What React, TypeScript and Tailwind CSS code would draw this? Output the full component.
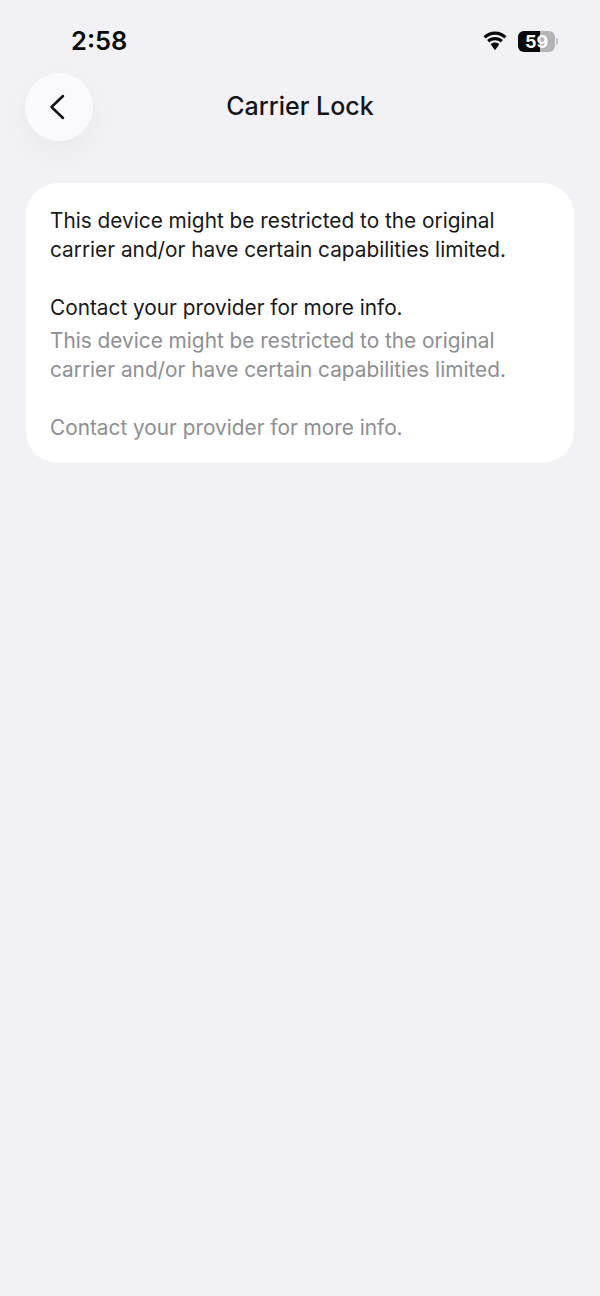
const BackIcon = () => (
  <svg width="18" height="28" viewBox="0 0 18 28" fill="none">
    <path d="M15 3 L3.500 14 L15 25" stroke="#111" strokeWidth="2.500" strokeLinecap="round" strokeLinejoin="round" />
  </svg>
);

const Wifi = () => (
  <svg width="26" height="20" viewBox="0 0 26 20" fill="#0a0a0a">
    <path d="M13 3.800c3.600 0 6.900 1.400 9.300 3.700l2.200-2.300C21.500 2.300 17.500.5 13 .5S4.500 2.300 1.500 5.200l2.200 2.300C6.100 5.200 9.400 3.800 13 3.800z" />
    <path d="M13 9.200c2.200 0 4.200.9 5.700 2.200l2.200-2.300C18.800 7.200 16 6 13 6S7.200 7.200 5.100 9.100l2.200 2.300c1.500-1.300 3.500-2.200 5.700-2.200z" />
    <path d="M13 11.500c-1.700 0-3.200.6-4.300 1.700L13 19.300l4.300-6.100c-1.100-1.100-2.600-1.700-4.300-1.700z" />
  </svg>
);

const Battery = () => (
  <div className="flex items-center">
    <div className="relative w-[37px] h-[21px] rounded-[6px] bg-[#b4b4b6] overflow-hidden">
      <div className="absolute left-0 top-0 bottom-0 w-[22px] bg-[#0a0a0a]" />
      <span className="absolute inset-0 flex items-center justify-center text-white text-[18px] font-bold">59</span>
    </div>
    <div className="w-[2px] h-[7px] ml-[1px] rounded-r bg-[#c4c4c6]" />
  </div>
);

const Copy = ({ color }: { color: string }) => (
  <div className={color}>
    <p>This device might be restricted to the original<br />carrier and/or have certain capabilities limited.</p>
    <p className="mt-[29px]">Contact your provider for more info.</p>
  </div>
);

export default function App() {
  return (
    <div className="w-[600px] h-[1296px] bg-[#f1f1f6] overflow-hidden font-['Inter',sans-serif]">
      <div className="flex justify-between items-center pl-[71px] pr-[42px] pt-[26px] h-[56px]">
        <span className="text-[25.500px] font-semibold text-[#0a0a0a]">2:58</span>
        <div className="flex items-center gap-[10px]">
          <Wifi />
          <Battery />
        </div>
      </div>
      <div className="relative flex items-center justify-center h-[68px] mt-[17px]">
        <button className="absolute left-[25px] top-0 w-[68px] h-[68px] rounded-full bg-[#fafafd] flex items-center justify-center pr-[4px] shadow-[0_10px_30px_rgba(0,0,0,0.04)]">
          <BackIcon />
        </button>
        <h1 className="text-[25px] font-medium text-[#161618]">Carrier Lock</h1>
      </div>
      <div className="mx-[26px] mt-[42px] h-[280px] rounded-[32px] bg-white px-[24px] pt-[23px] text-[20.800px] leading-[29px]">
        <Copy color="text-[#18181a]" />
        <div className="mt-[4px]"><Copy color="text-[#8e8e93]" /></div>
      </div>
    </div>
  );
}
